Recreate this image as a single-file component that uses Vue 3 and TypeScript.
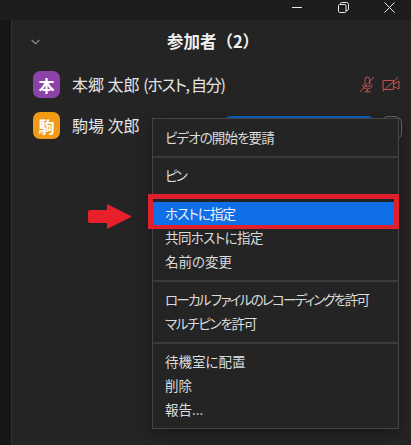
<script setup lang="ts">
interface MenuItem {
  label: string
  active?: boolean
  fit?: string
}

// fit: kana run narrower than Noto's, squeeze those labels
const menuGroups: MenuItem[][] = [
  [{ label: 'ビデオの開始を要請', fit: 'tight' }],
  [{ label: 'ピン', fit: 'tightest' }],
  [
    { label: 'ホストに指定', active: true, fit: 'tight' },
    { label: '共同ホストに指定', fit: 'slight' },
    { label: '名前の変更' }
  ],
  [
    { label: 'ローカル ファイルのレコーディングを許可', fit: 'tightest' },
    { label: 'マルチピンを許可', fit: 'tighter' }
  ],
  [{ label: '待機室に配置' }, { label: '削除' }, { label: '報告...' }]
]
</script>

<template>
  <div class="window">
    <header class="titlebar">
      <svg class="win-icon" width="11" height="11" viewBox="0 0 11 11"><path d="M0 5.5h10" /></svg>
      <svg class="win-icon" width="11" height="11" viewBox="0 0 11 11">
        <rect x="0.5" y="2.5" width="7.5" height="8" rx="1.2" />
        <path d="M2.5 2.5V1.7Q2.5.5 3.7.5H8.5Q10.5.5 10.5 2.5V7.3Q10.5 8.5 8 8.5" />
      </svg>
      <svg class="win-icon" width="11" height="11" viewBox="0 0 11 11"><path d="M.5.5l10 10M10.5.5l-10 10" /></svg>
    </header>

    <div class="body">
      <div class="side"></div>
      <main class="panel">
        <div class="panel-head">
          <svg class="chevron" width="9" height="6" viewBox="0 0 9 6"><path d="M.7 1l3.8 3.6L8.3 1" /></svg>
          <h1>参加者（2）</h1>
        </div>

        <div class="row">
          <span class="avatar purple">本</span>
          <span class="name">本郷 太郎 <span class="role">(ホスト, 自分)</span></span>
          <span class="status">
            <svg width="16" height="17" viewBox="0 0 16 17">
              <path d="M6 3.500a2.400 2.400 0 0 1 4.800 0v5a2.400 2.400 0 0 1-4.800 0zM3.800 8.500c.2 3 2 4.600 4.600 4.600s4.400-1.600 4.600-4.600M8.400 13.100v2.600M5.500 15.800h6M1 16L15 1" />
            </svg>
            <svg width="18" height="15" viewBox="0 0 18 15">
              <path d="M1 3.500h10.500v9H1zM11.500 7l5.500-3v8l-5.500-2.500M.5 14.500L16 .5" />
            </svg>
          </span>
        </div>

        <div class="row">
          <span class="avatar orange">駒</span>
          <span class="name">駒場 次郎</span>
          <span class="behind-btn blue"></span>
          <span class="behind-btn more"></span>
        </div>

        <div class="menu">
          <section v-for="(group, i) in menuGroups" :key="i" class="group">
            <div v-for="item in group" :key="item.label" class="item" :class="[item.fit, { active: item.active }]">
              {{ item.label }}
            </div>
          </section>
        </div>

        <div class="red-box"></div>
        <svg class="arrow" width="45" height="25" viewBox="0 0 45 25">
          <path d="M0 8Q0 6 2 6H19V0L44 12.500 19 25V19H2Q0 19 0 17Z" />
        </svg>
      </main>
    </div>
  </div>
</template>

<style>
html,
body {
  margin: 0;
  background: #242424;
}
</style>

<style scoped>
.window {
  width: 411px;
  height: 445px;
  display: flex;
  flex-direction: column;
  overflow: hidden;
  background: #242424;
  color: #e6e6e6;
  font-family: "Noto Sans CJK JP", "Liberation Sans", sans-serif;
  font-feature-settings: "palt";
}

.titlebar {
  height: 20px;
  flex: none;
  display: flex;
  align-items: flex-start;
  justify-content: flex-end;
  gap: 35px;
  padding: 2px 16px 0 0;
  box-sizing: border-box;
  background: #1d1d1d;
}

.win-icon {
  fill: none;
  stroke: #e8e8e8;
  stroke-width: 1;
}

.body {
  flex: 1;
  display: flex;
  min-height: 0;
}

.side {
  width: 11px;
  flex: none;
  background: #161616;
  border-right: 1px solid #333;
}

.panel {
  position: relative;
  flex: 1;
  padding: 0 10px 0 21px;
}

.panel-head {
  position: relative;
  height: 44px;
  display: flex;
  align-items: center;
  justify-content: center;
  padding-right: 8px;
}

h1 {
  margin: 0 0 3px;
  font-size: 16.500px;
  font-weight: 700;
  font-feature-settings: normal;
  color: #f0f0f0;
}

.chevron {
  position: absolute;
  left: -2px;
  top: 19px;
  fill: none;
  stroke: #8a8a8a;
  stroke-width: 1.200;
}

.row {
  height: 41px;
  display: flex;
  align-items: center;
}

.avatar {
  width: 27px;
  height: 27px;
  flex: none;
  display: flex;
  align-items: center;
  justify-content: center;
  border-radius: 7px;
  font-size: 16px;
  font-weight: 700;
  color: #fff;
}

.purple {
  background: #8b43a8;
}

.orange {
  background: #f09a16;
}

.name {
  margin: 0 0 2px 12px;
  font-size: 16px;
  color: #e4e4e4;
  white-space: nowrap;
}

.role {
  letter-spacing: -1.300px;
}

.status {
  margin-left: auto;
  margin-right: 1px;
  display: flex;
  align-items: center;
  gap: 7px;
}

.status svg {
  fill: none;
  stroke: #c9504f;
  stroke-width: 1;
}

.behind-btn {
  position: absolute;
  top: 96px;
  height: 24px;
  box-sizing: border-box;
}

.blue {
  left: 211px;
  width: 152px;
  border-radius: 8px;
  background: #0e63c4;
}

.more {
  left: 369px;
  width: 21px;
  border: 1px solid #6a6a6a;
  border-radius: 7px;
}

.menu {
  position: absolute;
  left: 140px;
  top: 98px;
  width: 247px;
  box-sizing: border-box;
  border: 1px solid #454545;
  background: #242424;
  box-shadow: 0 4px 14px rgba(0, 0, 0, 0.35);
  font-size: 13.500px;
  color: #dcdcdc;
}

.group {
  padding: 6px 0;
  border-bottom: 2px solid #3a3a3a;
}

.group:first-child {
  padding-top: 7px;
}

.group:last-child {
  border-bottom: none;
}

.item {
  height: 24px;
  line-height: 22px;
  padding-left: 12px;
  white-space: nowrap;
}

.item.active {
  background: #0e6fe8;
  color: #f2f2f2;
}

.slight {
  letter-spacing: -0.600px;
}

.tight {
  letter-spacing: -0.900px;
}

.tighter {
  letter-spacing: -1.250px;
}

.tightest {
  letter-spacing: -1.750px;
}

.red-box {
  position: absolute;
  left: 136px;
  top: 174px;
  width: 251px;
  height: 35px;
  box-sizing: border-box;
  border: 5px solid #e0202c;
  border-bottom-width: 4px;
  pointer-events: none;
}

.arrow {
  position: absolute;
  left: 76px;
  top: 184px;
  fill: #e8202c;
}
</style>
